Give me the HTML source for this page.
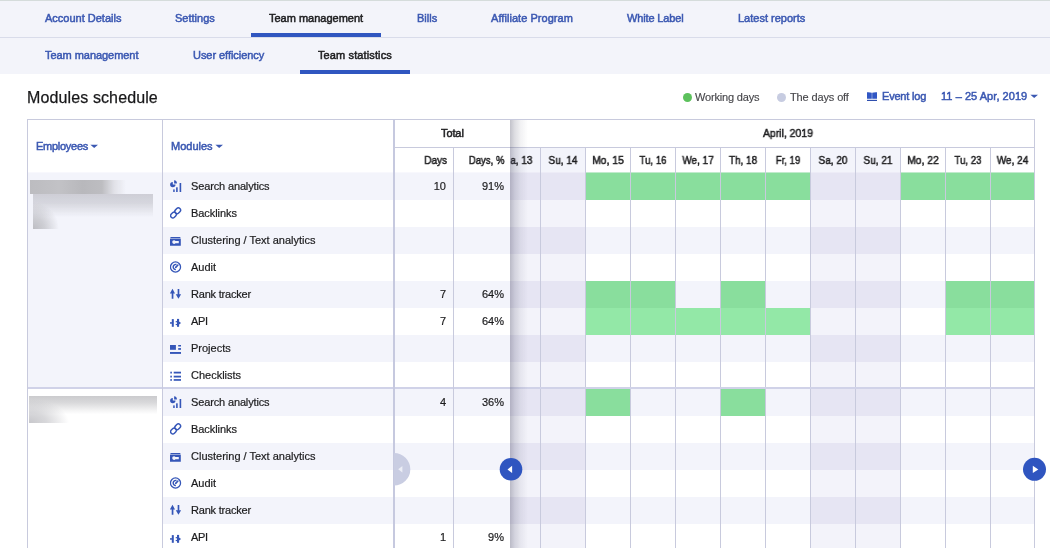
<!DOCTYPE html>
<html><head><meta charset="utf-8"><title>Modules schedule</title>
<style>
*{box-sizing:border-box}
html,body{margin:0;padding:0}
body{width:1050px;height:548px;overflow:hidden;background:#fff;position:relative;font-family:"Liberation Sans",sans-serif;font-size:11px;color:#222}
.abs,.t{position:absolute}
.t{white-space:nowrap;line-height:14px;height:14px;will-change:transform}
.nav{position:absolute;left:0;width:1050px;background:#f3f4fa}
.lnk{color:#3b58b2;-webkit-text-stroke:0.5px #3b58b2}
.blk{color:#1d1d1f;-webkit-text-stroke:0.5px #1d1d1f}
.ul{position:absolute;height:4px;background:#3056c0}
.hl{position:absolute;height:1px;background:#c8cadd}
.vl{position:absolute;width:1px;background:#c8cadd}
.ic{position:absolute;width:12px;height:14px}
.ic svg{display:block}
</style></head><body>

<div class="nav" style="top:0;height:38px;border-top:1px solid #d5dcdb;border-bottom:1px solid #d9dcea"></div>
<div class="nav" style="top:38px;height:36px"></div>
<div class="t lnk" style="left:45px;top:11px;">Account Details</div>
<div class="t lnk" style="left:175px;top:11px;">Settings</div>
<div class="t blk" style="left:269px;top:11px;">Team management</div>
<div class="t lnk" style="left:416.5px;top:11px;">Bills</div>
<div class="t lnk" style="left:491.3px;top:11px;letter-spacing:0.05px;">Affiliate Program</div>
<div class="t lnk" style="left:627px;top:11px;letter-spacing:-0.15px;">White Label</div>
<div class="t lnk" style="left:737.8px;top:11px;">Latest reports</div>
<div class="ul" style="left:251px;top:33px;width:130px"></div>
<div class="t lnk" style="left:45px;top:48px;letter-spacing:-0.05px;">Team management</div>
<div class="t lnk" style="left:192.7px;top:48px;letter-spacing:-0.05px;">User efficiency</div>
<div class="t blk" style="left:318px;top:48px;letter-spacing:0.12px;">Team statistics</div>
<div class="ul" style="left:300px;top:70px;width:110px"></div>
<div class="t" style="left:27px;top:88px;letter-spacing:0.12px;font-size:16px;line-height:20px;height:20px;color:#18181a;-webkit-text-stroke:0.25px #18181a">Modules schedule</div>
<div class="abs" style="left:683px;top:93px;width:9px;height:9px;background:#5cc15c;border-radius:50%"></div>
<div class="t" style="left:695px;top:90px;letter-spacing:-0.18px;color:#47474b;-webkit-text-stroke:0.15px #47474b">Working days</div>
<div class="abs" style="left:777px;top:93px;width:9px;height:9px;background:#c7cce1;border-radius:50%"></div>
<div class="t" style="left:789.5px;top:90px;letter-spacing:-0.13px;color:#47474b;-webkit-text-stroke:0.15px #47474b">The days off</div>
<svg class="abs" style="left:867px;top:92px" width="10" height="9" viewBox="0 0 10 9"><path d="M0 0.2Q2.6 -0.1 4.8 0.8V6.8H0z M10 0.2Q7.4 -0.1 5.2 0.8V6.8H10z" fill="#3157c4"/><path d="M0 7.8H10V9H0z" fill="#2f4fae"/></svg>
<div class="t lnk" style="left:882px;top:89px;letter-spacing:-0.2px;">Event log</div>
<div class="t lnk" style="left:941px;top:89px;letter-spacing:0.05px;">11 – 25 Apr, 2019</div>
<svg class="abs" style="left:1030px;top:94px" width="9" height="6" viewBox="0 0 9 6"><path d="M0.4 0.7H8L4.2 4.1z" fill="#3b58b2"/></svg>
<div class="abs" style="left:510px;top:173px;width:524px;height:27px;background:#f3f4fb;"></div>
<div class="abs" style="left:495px;top:173px;width:45px;height:27px;background:#e6e5f3;"></div>
<div class="abs" style="left:540px;top:173px;width:45px;height:27px;background:#e6e5f3;"></div>
<div class="abs" style="left:810px;top:173px;width:45px;height:27px;background:#e6e5f3;"></div>
<div class="abs" style="left:855px;top:173px;width:45px;height:27px;background:#e6e5f3;"></div>
<div class="abs" style="left:586px;top:173px;width:44px;height:27px;background:#89de9d;"></div>
<div class="abs" style="left:631px;top:173px;width:44px;height:27px;background:#89de9d;"></div>
<div class="abs" style="left:676px;top:173px;width:44px;height:27px;background:#89de9d;"></div>
<div class="abs" style="left:721px;top:173px;width:44px;height:27px;background:#89de9d;"></div>
<div class="abs" style="left:766px;top:173px;width:44px;height:27px;background:#89de9d;"></div>
<div class="abs" style="left:901px;top:173px;width:44px;height:27px;background:#89de9d;"></div>
<div class="abs" style="left:946px;top:173px;width:44px;height:27px;background:#89de9d;"></div>
<div class="abs" style="left:991px;top:173px;width:43px;height:27px;background:#89de9d;"></div>
<div class="abs" style="left:495px;top:200px;width:45px;height:27px;background:#f3f3fa;"></div>
<div class="abs" style="left:540px;top:200px;width:45px;height:27px;background:#f3f3fa;"></div>
<div class="abs" style="left:810px;top:200px;width:45px;height:27px;background:#f3f3fa;"></div>
<div class="abs" style="left:855px;top:200px;width:45px;height:27px;background:#f3f3fa;"></div>
<div class="abs" style="left:510px;top:227px;width:524px;height:27px;background:#f3f4fb;"></div>
<div class="abs" style="left:495px;top:227px;width:45px;height:27px;background:#e6e5f3;"></div>
<div class="abs" style="left:540px;top:227px;width:45px;height:27px;background:#e6e5f3;"></div>
<div class="abs" style="left:810px;top:227px;width:45px;height:27px;background:#e6e5f3;"></div>
<div class="abs" style="left:855px;top:227px;width:45px;height:27px;background:#e6e5f3;"></div>
<div class="abs" style="left:495px;top:254px;width:45px;height:27px;background:#f3f3fa;"></div>
<div class="abs" style="left:540px;top:254px;width:45px;height:27px;background:#f3f3fa;"></div>
<div class="abs" style="left:810px;top:254px;width:45px;height:27px;background:#f3f3fa;"></div>
<div class="abs" style="left:855px;top:254px;width:45px;height:27px;background:#f3f3fa;"></div>
<div class="abs" style="left:510px;top:281px;width:524px;height:27px;background:#f3f4fb;"></div>
<div class="abs" style="left:495px;top:281px;width:45px;height:27px;background:#e6e5f3;"></div>
<div class="abs" style="left:540px;top:281px;width:45px;height:27px;background:#e6e5f3;"></div>
<div class="abs" style="left:810px;top:281px;width:45px;height:27px;background:#e6e5f3;"></div>
<div class="abs" style="left:855px;top:281px;width:45px;height:27px;background:#e6e5f3;"></div>
<div class="abs" style="left:586px;top:281px;width:44px;height:27px;background:#89de9d;"></div>
<div class="abs" style="left:631px;top:281px;width:44px;height:27px;background:#89de9d;"></div>
<div class="abs" style="left:721px;top:281px;width:44px;height:27px;background:#89de9d;"></div>
<div class="abs" style="left:946px;top:281px;width:44px;height:27px;background:#89de9d;"></div>
<div class="abs" style="left:991px;top:281px;width:43px;height:27px;background:#89de9d;"></div>
<div class="abs" style="left:495px;top:308px;width:45px;height:27px;background:#f3f3fa;"></div>
<div class="abs" style="left:540px;top:308px;width:45px;height:27px;background:#f3f3fa;"></div>
<div class="abs" style="left:810px;top:308px;width:45px;height:27px;background:#f3f3fa;"></div>
<div class="abs" style="left:855px;top:308px;width:45px;height:27px;background:#f3f3fa;"></div>
<div class="abs" style="left:586px;top:308px;width:44px;height:27px;background:#93e8a7;"></div>
<div class="abs" style="left:631px;top:308px;width:44px;height:27px;background:#93e8a7;"></div>
<div class="abs" style="left:676px;top:308px;width:44px;height:27px;background:#93e8a7;"></div>
<div class="abs" style="left:721px;top:308px;width:44px;height:27px;background:#93e8a7;"></div>
<div class="abs" style="left:766px;top:308px;width:44px;height:27px;background:#93e8a7;"></div>
<div class="abs" style="left:946px;top:308px;width:44px;height:27px;background:#93e8a7;"></div>
<div class="abs" style="left:991px;top:308px;width:43px;height:27px;background:#93e8a7;"></div>
<div class="abs" style="left:510px;top:335px;width:524px;height:27px;background:#f3f4fb;"></div>
<div class="abs" style="left:495px;top:335px;width:45px;height:27px;background:#e6e5f3;"></div>
<div class="abs" style="left:540px;top:335px;width:45px;height:27px;background:#e6e5f3;"></div>
<div class="abs" style="left:810px;top:335px;width:45px;height:27px;background:#e6e5f3;"></div>
<div class="abs" style="left:855px;top:335px;width:45px;height:27px;background:#e6e5f3;"></div>
<div class="abs" style="left:495px;top:362px;width:45px;height:27px;background:#f3f3fa;"></div>
<div class="abs" style="left:540px;top:362px;width:45px;height:27px;background:#f3f3fa;"></div>
<div class="abs" style="left:810px;top:362px;width:45px;height:27px;background:#f3f3fa;"></div>
<div class="abs" style="left:855px;top:362px;width:45px;height:27px;background:#f3f3fa;"></div>
<div class="abs" style="left:510px;top:389px;width:524px;height:27px;background:#f3f4fb;"></div>
<div class="abs" style="left:495px;top:389px;width:45px;height:27px;background:#e6e5f3;"></div>
<div class="abs" style="left:540px;top:389px;width:45px;height:27px;background:#e6e5f3;"></div>
<div class="abs" style="left:810px;top:389px;width:45px;height:27px;background:#e6e5f3;"></div>
<div class="abs" style="left:855px;top:389px;width:45px;height:27px;background:#e6e5f3;"></div>
<div class="abs" style="left:586px;top:389px;width:44px;height:27px;background:#89de9d;"></div>
<div class="abs" style="left:721px;top:389px;width:44px;height:27px;background:#89de9d;"></div>
<div class="abs" style="left:495px;top:416px;width:45px;height:27px;background:#f3f3fa;"></div>
<div class="abs" style="left:540px;top:416px;width:45px;height:27px;background:#f3f3fa;"></div>
<div class="abs" style="left:810px;top:416px;width:45px;height:27px;background:#f3f3fa;"></div>
<div class="abs" style="left:855px;top:416px;width:45px;height:27px;background:#f3f3fa;"></div>
<div class="abs" style="left:510px;top:443px;width:524px;height:27px;background:#f3f4fb;"></div>
<div class="abs" style="left:495px;top:443px;width:45px;height:27px;background:#e6e5f3;"></div>
<div class="abs" style="left:540px;top:443px;width:45px;height:27px;background:#e6e5f3;"></div>
<div class="abs" style="left:810px;top:443px;width:45px;height:27px;background:#e6e5f3;"></div>
<div class="abs" style="left:855px;top:443px;width:45px;height:27px;background:#e6e5f3;"></div>
<div class="abs" style="left:495px;top:470px;width:45px;height:27px;background:#f3f3fa;"></div>
<div class="abs" style="left:540px;top:470px;width:45px;height:27px;background:#f3f3fa;"></div>
<div class="abs" style="left:810px;top:470px;width:45px;height:27px;background:#f3f3fa;"></div>
<div class="abs" style="left:855px;top:470px;width:45px;height:27px;background:#f3f3fa;"></div>
<div class="abs" style="left:510px;top:497px;width:524px;height:27px;background:#f3f4fb;"></div>
<div class="abs" style="left:495px;top:497px;width:45px;height:27px;background:#e6e5f3;"></div>
<div class="abs" style="left:540px;top:497px;width:45px;height:27px;background:#e6e5f3;"></div>
<div class="abs" style="left:810px;top:497px;width:45px;height:27px;background:#e6e5f3;"></div>
<div class="abs" style="left:855px;top:497px;width:45px;height:27px;background:#e6e5f3;"></div>
<div class="abs" style="left:495px;top:524px;width:45px;height:27px;background:#f3f3fa;"></div>
<div class="abs" style="left:540px;top:524px;width:45px;height:27px;background:#f3f3fa;"></div>
<div class="abs" style="left:810px;top:524px;width:45px;height:27px;background:#f3f3fa;"></div>
<div class="abs" style="left:855px;top:524px;width:45px;height:27px;background:#f3f3fa;"></div>
<div class="abs" style="left:510px;top:172px;width:524px;height:1px;background:#f3f4fb;opacity:.6"></div>
<div class="abs" style="left:495px;top:172px;width:45px;height:1px;background:#e6e5f3;opacity:.6"></div>
<div class="abs" style="left:540px;top:172px;width:45px;height:1px;background:#e6e5f3;opacity:.6"></div>
<div class="abs" style="left:810px;top:172px;width:45px;height:1px;background:#e6e5f3;opacity:.6"></div>
<div class="abs" style="left:855px;top:172px;width:45px;height:1px;background:#e6e5f3;opacity:.6"></div>
<div class="abs" style="left:586px;top:172px;width:44px;height:1px;background:#89de9d;opacity:.5"></div>
<div class="abs" style="left:631px;top:172px;width:44px;height:1px;background:#89de9d;opacity:.5"></div>
<div class="abs" style="left:676px;top:172px;width:44px;height:1px;background:#89de9d;opacity:.5"></div>
<div class="abs" style="left:721px;top:172px;width:44px;height:1px;background:#89de9d;opacity:.5"></div>
<div class="abs" style="left:766px;top:172px;width:44px;height:1px;background:#89de9d;opacity:.5"></div>
<div class="abs" style="left:901px;top:172px;width:44px;height:1px;background:#89de9d;opacity:.5"></div>
<div class="abs" style="left:946px;top:172px;width:44px;height:1px;background:#89de9d;opacity:.5"></div>
<div class="abs" style="left:991px;top:172px;width:43px;height:1px;background:#89de9d;opacity:.5"></div>
<div class="abs" style="left:495px;top:148px;width:45px;height:24px;background:#f3f4fb;"></div>
<div class="abs" style="left:540px;top:148px;width:45px;height:24px;background:#f3f4fb;"></div>
<div class="abs" style="left:810px;top:148px;width:45px;height:24px;background:#f3f4fb;"></div>
<div class="abs" style="left:855px;top:148px;width:45px;height:24px;background:#f3f4fb;"></div>
<div class="vl" style="left:495px;top:148px;height:400px"></div>
<div class="t blk" style="left:496px;top:153px;width:44px;text-align:center;transform:scaleX(0.904)">Sa, 13</div>
<div class="vl" style="left:540px;top:148px;height:400px"></div>
<div class="t blk" style="left:541px;top:153px;width:44px;text-align:center;transform:scaleX(0.907)">Su, 14</div>
<div class="vl" style="left:585px;top:148px;height:400px"></div>
<div class="t blk" style="left:586px;top:153px;width:44px;text-align:center;transform:scaleX(0.94)">Mo, 15</div>
<div class="vl" style="left:630px;top:148px;height:400px"></div>
<div class="t blk" style="left:631px;top:153px;width:44px;text-align:center;transform:scaleX(0.875)">Tu, 16</div>
<div class="vl" style="left:675px;top:148px;height:400px"></div>
<div class="t blk" style="left:676px;top:153px;width:44px;text-align:center;transform:scaleX(0.91)">We, 17</div>
<div class="vl" style="left:720px;top:148px;height:400px"></div>
<div class="t blk" style="left:721px;top:153px;width:44px;text-align:center;transform:scaleX(0.905)">Th, 18</div>
<div class="vl" style="left:765px;top:148px;height:400px"></div>
<div class="t blk" style="left:766px;top:153px;width:44px;text-align:center;transform:scaleX(0.87)">Fr, 19</div>
<div class="vl" style="left:810px;top:148px;height:400px"></div>
<div class="t blk" style="left:811px;top:153px;width:44px;text-align:center;transform:scaleX(0.904)">Sa, 20</div>
<div class="vl" style="left:855px;top:148px;height:400px"></div>
<div class="t blk" style="left:856px;top:153px;width:44px;text-align:center;transform:scaleX(0.907)">Su, 21</div>
<div class="vl" style="left:900px;top:148px;height:400px"></div>
<div class="t blk" style="left:901px;top:153px;width:44px;text-align:center;transform:scaleX(0.94)">Mo, 22</div>
<div class="vl" style="left:945px;top:148px;height:400px"></div>
<div class="t blk" style="left:946px;top:153px;width:44px;text-align:center;transform:scaleX(0.875)">Tu, 23</div>
<div class="vl" style="left:990px;top:148px;height:400px"></div>
<div class="t blk" style="left:991px;top:153px;width:43px;text-align:center;transform:scaleX(0.91)">We, 24</div>
<div class="vl" style="left:1034px;top:119px;height:429px"></div>
<div class="hl" style="left:27px;top:119px;width:1008px"></div>
<div class="hl" style="left:394px;top:147px;width:640px"></div>
<div class="t blk" style="left:763px;top:126px;transform:scaleX(.95);transform-origin:0 0">April, 2019</div>
<div class="hl" style="left:27px;top:387px;width:1007px;height:2px;background:#d0d2e8"></div>
<div class="abs" style="left:28px;top:120px;width:482px;height:53px;background:#fff;"></div>
<div class="abs" style="left:28px;top:173px;width:134px;height:214px;background:#f3f4fb;"></div>
<div class="abs" style="left:28px;top:172px;width:134px;height:1px;background:#f3f4fb;opacity:.6"></div>
<div class="abs" style="left:28px;top:389px;width:134px;height:159px;background:#fff;"></div>
<div class="abs" style="left:163px;top:173px;width:347px;height:27px;background:#f3f4fb;"></div>
<div class="abs" style="left:163px;top:200px;width:347px;height:27px;background:#fff;"></div>
<div class="abs" style="left:163px;top:227px;width:347px;height:27px;background:#f3f4fb;"></div>
<div class="abs" style="left:163px;top:254px;width:347px;height:27px;background:#fff;"></div>
<div class="abs" style="left:163px;top:281px;width:347px;height:27px;background:#f3f4fb;"></div>
<div class="abs" style="left:163px;top:308px;width:347px;height:27px;background:#fff;"></div>
<div class="abs" style="left:163px;top:335px;width:347px;height:27px;background:#f3f4fb;"></div>
<div class="abs" style="left:163px;top:362px;width:347px;height:27px;background:#fff;"></div>
<div class="abs" style="left:163px;top:389px;width:347px;height:27px;background:#f3f4fb;"></div>
<div class="abs" style="left:163px;top:416px;width:347px;height:27px;background:#fff;"></div>
<div class="abs" style="left:163px;top:443px;width:347px;height:27px;background:#f3f4fb;"></div>
<div class="abs" style="left:163px;top:470px;width:347px;height:27px;background:#fff;"></div>
<div class="abs" style="left:163px;top:497px;width:347px;height:27px;background:#f3f4fb;"></div>
<div class="abs" style="left:163px;top:524px;width:347px;height:27px;background:#fff;"></div>
<div class="abs" style="left:163px;top:172px;width:347px;height:1px;background:#f3f4fb;opacity:.6"></div>
<div class="hl" style="left:27px;top:387px;width:483px;height:2px;background:#d0d2e8"></div>
<div class="abs" style="left:510px;top:120px;width:18px;height:428px;background:linear-gradient(to right,rgba(70,70,95,.33),rgba(70,70,95,.19) 25%,rgba(70,70,95,.07) 60%,rgba(70,70,100,0));"></div>
<div class="vl" style="left:27px;top:119px;height:429px"></div>
<div class="vl" style="left:162px;top:119px;height:429px"></div>
<div class="vl" style="left:393px;top:119px;height:429px;width:2px;background:#c6c9df"></div>
<div class="vl" style="left:453px;top:148px;height:400px"></div>
<div class="hl" style="left:394px;top:147px;width:116px"></div>
<div class="t blk" style="left:441px;top:126px;letter-spacing:-0.1px;">Total</div>
<div class="t blk" style="left:394px;top:153px;width:53px;text-align:right;transform:scaleX(.91);transform-origin:100% 0">Days</div>
<div class="t blk" style="left:454px;top:153px;width:50.5px;text-align:right;transform:scaleX(.87);transform-origin:100% 0">Days, %</div>
<div class="t lnk" style="left:36px;top:139px;letter-spacing:-0.27px;">Employees</div>
<svg class="abs" style="left:90px;top:144px" width="9" height="6" viewBox="0 0 9 6"><path d="M0.4 0.7H8L4.2 4.1z" fill="#3b58b2"/></svg>
<div class="t lnk" style="left:171px;top:139px;">Modules</div>
<svg class="abs" style="left:215px;top:144px" width="9" height="6" viewBox="0 0 9 6"><path d="M0.4 0.7H8L4.2 4.1z" fill="#3b58b2"/></svg>
<div class="ic" style="left:170px;top:180px"><svg viewBox="0 0 12 14" width="12" height="14" fill="#3556b8"><path d="M2.8 4.6V1.9A2.7 2.7 0 1 0 5.5 4.6z"/><path d="M4.1 3.5V0.2A3.1 3.1 0 0 1 6.9 3.5z"/><rect x="3.2" y="9.4" width="1.5" height="2.6"/><rect x="6.1" y="7.3" width="1.6" height="4.7"/><rect x="9.6" y="3" width="1.6" height="9"/></svg></div>
<div class="t" style="left:190.5px;top:179px;letter-spacing:-0.14px;color:#1c1c1e;-webkit-text-stroke:0.2px #1c1c1e">Search analytics</div>
<div class="t" style="left:394px;top:179px;width:52px;text-align:right;color:#1c1c1e;-webkit-text-stroke:0.2px #1c1c1e">10</div>
<div class="t" style="left:454px;top:179px;width:50px;text-align:right;color:#1c1c1e;-webkit-text-stroke:0.2px #1c1c1e">91%</div>
<div class="ic" style="left:170px;top:207px"><svg viewBox="0 0 12 14" width="12" height="14" fill="#3556b8"><g fill="none" stroke="#3556b8" stroke-width="1.45"><rect x="-3.1" y="-2.2" width="6.2" height="4.4" rx="2.2" transform="translate(7.7,3.8) rotate(-45)"/><rect x="-3.1" y="-2.2" width="6.2" height="4.4" rx="2.2" transform="translate(3.5,8.0) rotate(-45)"/></g></svg></div>
<div class="t" style="left:190.5px;top:206px;letter-spacing:-0.07px;color:#1c1c1e;-webkit-text-stroke:0.2px #1c1c1e">Backlinks</div>
<div class="ic" style="left:170px;top:234px"><svg viewBox="0 0 12 14" width="12" height="14" fill="#3556b8"><path d="M0.7 2.9H10.1L10.8 4.6H0z"/><path d="M0 4.95H10.8V11.7H0z M4 6.3a1.8 1.8 0 1 0 0 3.6a1.8 1.8 0 0 0 1.5-.75H8.8V7.05H5.5a1.8 1.8 0 0 0-1.5-.75z" fill-rule="evenodd"/></svg></div>
<div class="t" style="left:190.5px;top:233px;color:#1c1c1e;-webkit-text-stroke:0.2px #1c1c1e">Clustering / Text analytics</div>
<div class="ic" style="left:170px;top:261px"><svg viewBox="0 0 12 14" width="12" height="14" fill="#3556b8"><g fill="none" stroke="#3556b8"><circle cx="5.5" cy="6.0" r="5.05" stroke-width="1.3"/><path d="M6.5 3.5A2.6 2.6 0 1 0 5.9 8.6" stroke-width="1.45"/></g><path d="M5.7 6.4L7.9 4" stroke="#3556b8" stroke-width="1.6" stroke-linecap="round"/></svg></div>
<div class="t" style="left:190.5px;top:260px;color:#1c1c1e;-webkit-text-stroke:0.2px #1c1c1e">Audit</div>
<div class="ic" style="left:170px;top:288px"><svg viewBox="0 0 12 14" width="12" height="14" fill="#3556b8"><path d="M2.5 0.8L-0.1 5.5H1.7V10.8H3.4V5.5H5z"/><path d="M8.45 10.7L5.8 6.3H7.65V1.1H9.3V6.3H11.1z"/></svg></div>
<div class="t" style="left:190.5px;top:287px;letter-spacing:-0.2px;color:#1c1c1e;-webkit-text-stroke:0.2px #1c1c1e">Rank tracker</div>
<div class="t" style="left:394px;top:287px;width:52px;text-align:right;color:#1c1c1e;-webkit-text-stroke:0.2px #1c1c1e">7</div>
<div class="t" style="left:454px;top:287px;width:50px;text-align:right;color:#1c1c1e;-webkit-text-stroke:0.2px #1c1c1e">64%</div>
<div class="ic" style="left:170px;top:315px"><svg viewBox="0 0 12 14" width="12" height="14" fill="#3556b8"><rect x="0" y="7.2" width="2.2" height="1.5"/><rect x="1.8" y="4.1" width="2" height="7.7"/><rect x="7" y="3.9" width="2.1" height="7.9"/><rect x="5.7" y="6.1" width="1.5" height="1.2"/><rect x="5.7" y="8.9" width="1.5" height="1.2"/><path d="M9 6.6L11.1 8L9 9.4z"/></svg></div>
<div class="t" style="left:190.5px;top:314px;letter-spacing:-0.3px;color:#1c1c1e;-webkit-text-stroke:0.2px #1c1c1e">API</div>
<div class="t" style="left:394px;top:314px;width:52px;text-align:right;color:#1c1c1e;-webkit-text-stroke:0.2px #1c1c1e">7</div>
<div class="t" style="left:454px;top:314px;width:50px;text-align:right;color:#1c1c1e;-webkit-text-stroke:0.2px #1c1c1e">64%</div>
<div class="ic" style="left:170px;top:342px"><svg viewBox="0 0 12 14" width="12" height="14" fill="#3556b8"><rect x="0" y="3" width="5.9" height="4.8"/><rect x="8.2" y="3" width="2.8" height="1.5"/><rect x="8.2" y="6.1" width="2.8" height="1.7"/><rect x="0" y="10" width="11" height="1.9"/></svg></div>
<div class="t" style="left:190.5px;top:341px;color:#1c1c1e;-webkit-text-stroke:0.2px #1c1c1e">Projects</div>
<div class="ic" style="left:170px;top:369px"><svg viewBox="0 0 12 14" width="12" height="14" fill="#3556b8"><rect x="0.3" y="2.7" width="1.6" height="1.8"/><rect x="0.3" y="6.7" width="1.6" height="1.8"/><rect x="0.3" y="10.1" width="1.6" height="1.7"/><rect x="3.7" y="2.7" width="7.3" height="1.8"/><rect x="3.7" y="6.7" width="7.3" height="1.8"/><rect x="3.7" y="10.1" width="7.3" height="1.7"/></svg></div>
<div class="t" style="left:190.5px;top:368px;color:#1c1c1e;-webkit-text-stroke:0.2px #1c1c1e">Checklists</div>
<div class="ic" style="left:170px;top:396px"><svg viewBox="0 0 12 14" width="12" height="14" fill="#3556b8"><path d="M2.8 4.6V1.9A2.7 2.7 0 1 0 5.5 4.6z"/><path d="M4.1 3.5V0.2A3.1 3.1 0 0 1 6.9 3.5z"/><rect x="3.2" y="9.4" width="1.5" height="2.6"/><rect x="6.1" y="7.3" width="1.6" height="4.7"/><rect x="9.6" y="3" width="1.6" height="9"/></svg></div>
<div class="t" style="left:190.5px;top:395px;letter-spacing:-0.14px;color:#1c1c1e;-webkit-text-stroke:0.2px #1c1c1e">Search analytics</div>
<div class="t" style="left:394px;top:395px;width:52px;text-align:right;color:#1c1c1e;-webkit-text-stroke:0.2px #1c1c1e">4</div>
<div class="t" style="left:454px;top:395px;width:50px;text-align:right;color:#1c1c1e;-webkit-text-stroke:0.2px #1c1c1e">36%</div>
<div class="ic" style="left:170px;top:423px"><svg viewBox="0 0 12 14" width="12" height="14" fill="#3556b8"><g fill="none" stroke="#3556b8" stroke-width="1.45"><rect x="-3.1" y="-2.2" width="6.2" height="4.4" rx="2.2" transform="translate(7.7,3.8) rotate(-45)"/><rect x="-3.1" y="-2.2" width="6.2" height="4.4" rx="2.2" transform="translate(3.5,8.0) rotate(-45)"/></g></svg></div>
<div class="t" style="left:190.5px;top:422px;letter-spacing:-0.07px;color:#1c1c1e;-webkit-text-stroke:0.2px #1c1c1e">Backlinks</div>
<div class="ic" style="left:170px;top:450px"><svg viewBox="0 0 12 14" width="12" height="14" fill="#3556b8"><path d="M0.7 2.9H10.1L10.8 4.6H0z"/><path d="M0 4.95H10.8V11.7H0z M4 6.3a1.8 1.8 0 1 0 0 3.6a1.8 1.8 0 0 0 1.5-.75H8.8V7.05H5.5a1.8 1.8 0 0 0-1.5-.75z" fill-rule="evenodd"/></svg></div>
<div class="t" style="left:190.5px;top:449px;color:#1c1c1e;-webkit-text-stroke:0.2px #1c1c1e">Clustering / Text analytics</div>
<div class="ic" style="left:170px;top:477px"><svg viewBox="0 0 12 14" width="12" height="14" fill="#3556b8"><g fill="none" stroke="#3556b8"><circle cx="5.5" cy="6.0" r="5.05" stroke-width="1.3"/><path d="M6.5 3.5A2.6 2.6 0 1 0 5.9 8.6" stroke-width="1.45"/></g><path d="M5.7 6.4L7.9 4" stroke="#3556b8" stroke-width="1.6" stroke-linecap="round"/></svg></div>
<div class="t" style="left:190.5px;top:476px;color:#1c1c1e;-webkit-text-stroke:0.2px #1c1c1e">Audit</div>
<div class="ic" style="left:170px;top:504px"><svg viewBox="0 0 12 14" width="12" height="14" fill="#3556b8"><path d="M2.5 0.8L-0.1 5.5H1.7V10.8H3.4V5.5H5z"/><path d="M8.45 10.7L5.8 6.3H7.65V1.1H9.3V6.3H11.1z"/></svg></div>
<div class="t" style="left:190.5px;top:503px;letter-spacing:-0.2px;color:#1c1c1e;-webkit-text-stroke:0.2px #1c1c1e">Rank tracker</div>
<div class="ic" style="left:170px;top:531px"><svg viewBox="0 0 12 14" width="12" height="14" fill="#3556b8"><rect x="0" y="7.2" width="2.2" height="1.5"/><rect x="1.8" y="4.1" width="2" height="7.7"/><rect x="7" y="3.9" width="2.1" height="7.9"/><rect x="5.7" y="6.1" width="1.5" height="1.2"/><rect x="5.7" y="8.9" width="1.5" height="1.2"/><path d="M9 6.6L11.1 8L9 9.4z"/></svg></div>
<div class="t" style="left:190.5px;top:530px;letter-spacing:-0.3px;color:#1c1c1e;-webkit-text-stroke:0.2px #1c1c1e">API</div>
<div class="t" style="left:394px;top:530px;width:52px;text-align:right;color:#1c1c1e;-webkit-text-stroke:0.2px #1c1c1e">1</div>
<div class="t" style="left:454px;top:530px;width:50px;text-align:right;color:#1c1c1e;-webkit-text-stroke:0.2px #1c1c1e">9%</div>
<div class="abs" style="left:30px;top:180px;width:96px;height:14px;background:linear-gradient(to right,#bcbcc0,#c2c2c6 30%,#b8b8bc 55%,#bdbdc1 75%,rgba(200,200,205,.4) 88%,rgba(243,244,251,0));"></div>
<div class="abs" style="left:33px;top:194px;width:120px;height:35px;background:linear-gradient(to bottom,rgba(170,170,178,.5),rgba(170,170,178,.4) 25%,rgba(170,170,178,.1) 55%,rgba(170,170,178,0) 66%)"></div>
<div class="abs" style="left:33px;top:200px;width:30px;height:29px;background:radial-gradient(ellipse 26px 27px at 0% 100%,rgba(170,170,175,.75),rgba(170,170,175,.5) 45%,rgba(170,170,175,0) 100%)"></div>
<div class="abs" style="left:29px;top:396px;width:128px;height:27px;background:linear-gradient(to bottom,rgba(160,160,165,.55),rgba(160,160,165,.4) 25%,rgba(160,160,165,.1) 55%,rgba(160,160,165,0) 68%)"></div>
<div class="abs" style="left:29px;top:398px;width:44px;height:25px;background:radial-gradient(ellipse 40px 24px at 0% 100%,rgba(185,185,190,.8),rgba(185,185,190,.55) 45%,rgba(185,185,190,0) 100%)"></div>
<svg class="abs" style="left:394px;top:450px" width="20" height="38" viewBox="0 0 20 38"><path d="M0 2.9A16.3 16.3 0 0 1 0 35.5z" fill="#c9cde2"/><path d="M4.2 19.3L8.4 16V22.6z" fill="#eceef6"/></svg>
<svg class="abs" style="left:498px;top:456px" width="26" height="26" viewBox="0 0 26 26"><circle cx="13" cy="13.3" r="11.3" fill="#2f55c0"/><path d="M9.5 13.4L14.1 9.7V17.1z" fill="#fff"/></svg>
<svg class="abs" style="left:1021px;top:456px" width="26" height="26" viewBox="0 0 26 26"><circle cx="13.5" cy="13.3" r="11.5" fill="#2f55c0"/><path d="M17.3 13.4L11.8 9.7V17.1z" fill="#fff"/></svg>
</body></html>
